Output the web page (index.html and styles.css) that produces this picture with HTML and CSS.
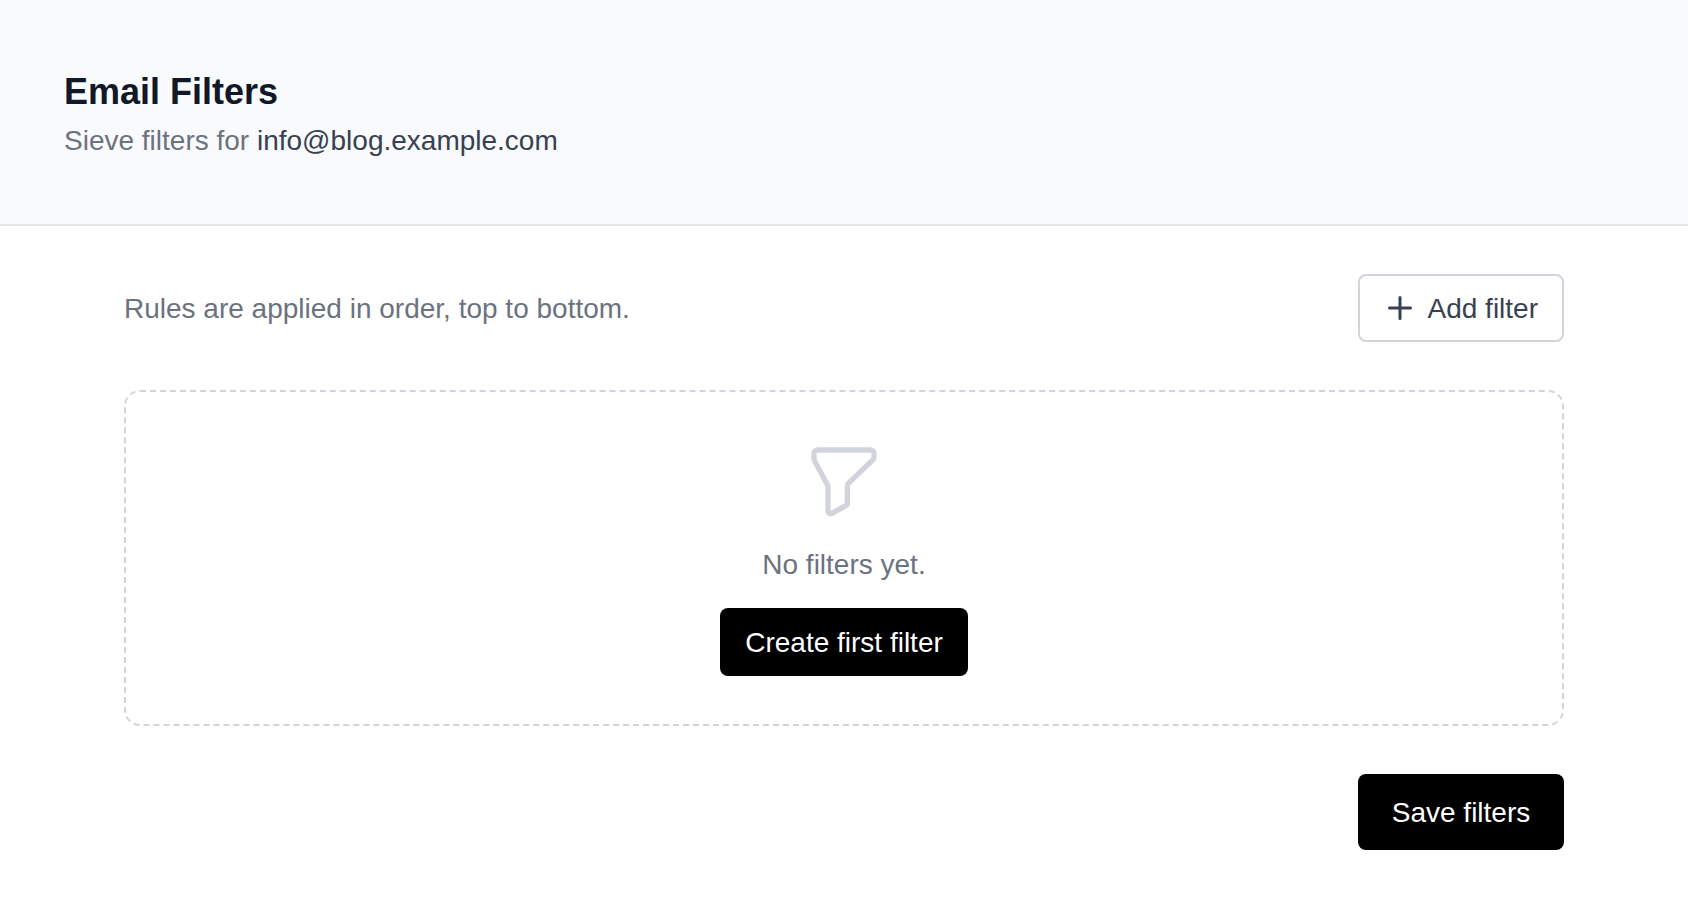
FILE: index.html
```html
<!DOCTYPE html>
<html lang="en">
<head>
    <meta charset="UTF-8">
    <title>Email Filters</title>
    <link rel="stylesheet" href="styles.css">
</head>
<body>
    <header class="page-header">
        <h1>Email Filters</h1>
        <p class="subtitle">Sieve filters for <span class="account">info@blog.example.com</span></p>
    </header>
    <main class="content">
        <div class="toolbar">
            <p class="hint">Rules are applied in order, top to bottom.</p>
            <button class="btn btn-outline" type="button">
                <svg class="plus-icon" viewBox="0 0 24 24" fill="none" stroke="currentColor" stroke-width="2" stroke-linecap="round" stroke-linejoin="round"><path d="M12 5v14M5 12h14"/></svg>
                <span class="btn-label">Add filter</span>
            </button>
        </div>
        <div class="empty-state">
            <svg class="funnel-icon" viewBox="0 0 24 24" fill="none" stroke="currentColor" stroke-width="1.6" stroke-linecap="round" stroke-linejoin="round"><path d="M4 3H20a1 1 0 0 1 1 1V5.2a1 1 0 0 1-.3.7L13.3 13a1 1 0 0 0-.3.7V19a.8.8 0 0 1-.45.7L8.4 22a.8.8 0 0 1-1.2-.7V14a1 1 0 0 0-.15-.5L3.15 6.2A1 1 0 0 1 3 5.7V4a1 1 0 0 1 1-1Z"/></svg>
            <p class="empty-text">No filters yet.</p>
            <button class="btn btn-dark" type="button">Create first filter</button>
        </div>
        <div class="actions">
            <button class="btn btn-save" type="button">Save filters</button>
        </div>
    </main>
</body>
</html>
```
FILE: styles.css
```css
body {
    margin: 0;
    font-family: "Liberation Sans", Arial, sans-serif;
    background-color: #ffffff;
    color: #111827;
}

p, h1 {
    margin: 0;
}

.page-header {
    background-color: #f9fafb;
    border-bottom: 2px solid #e5e7eb;
    height: 226px;
    box-sizing: border-box;
    padding: 72px 64px 0;
}

h1 {
    font-size: 36px;
    line-height: 40px;
    font-weight: 700;
}

.subtitle {
    margin-top: 9px;
    font-size: 28px;
    line-height: 40px;
    color: #6b7280;
}

.account {
    color: #374151;
}

.content {
    width: 1440px;
    margin: 0 auto;
    padding-top: 48px;
}

.toolbar {
    display: flex;
    justify-content: space-between;
    align-items: center;
}

.hint {
    padding-top: 2px;
    font-size: 28px;
    color: #6b7280;
}

.btn {
    font-family: inherit;
    font-size: 28px;
    border-radius: 8px;
    cursor: pointer;
}

.btn-outline {
    display: flex;
    align-items: center;
    gap: 10px;
    height: 68px;
    padding: 0 24px 0 22px;
    background-color: #ffffff;
    border: 2px solid #d1d5db;
    color: #374151;
}

.btn-label {
    padding-top: 2px;
}

.plus-icon {
    width: 36px;
    height: 36px;
}

.empty-state {
    display: flex;
    flex-direction: column;
    align-items: center;
    margin-top: 48px;
    height: 336px;
    box-sizing: border-box;
    padding-top: 48px;
    border: 2px dashed #d1d5db;
    border-radius: 16px;
}

.funnel-icon {
    width: 80px;
    height: 80px;
    color: #d1d5db;
}

.empty-text {
    margin-top: 26px;
    font-size: 28px;
    line-height: 38px;
    color: #6b7280;
}

.btn-dark {
    margin-top: 24px;
    height: 68px;
    padding: 2px 25px 0;
    background-color: #000000;
    border: none;
    color: #ffffff;
}

.actions {
    display: flex;
    justify-content: flex-end;
    margin-top: 48px;
}

.btn-save {
    width: 206px;
    height: 76px;
    padding-top: 2px;
    background-color: #000000;
    border: none;
    color: #ffffff;
}
```
